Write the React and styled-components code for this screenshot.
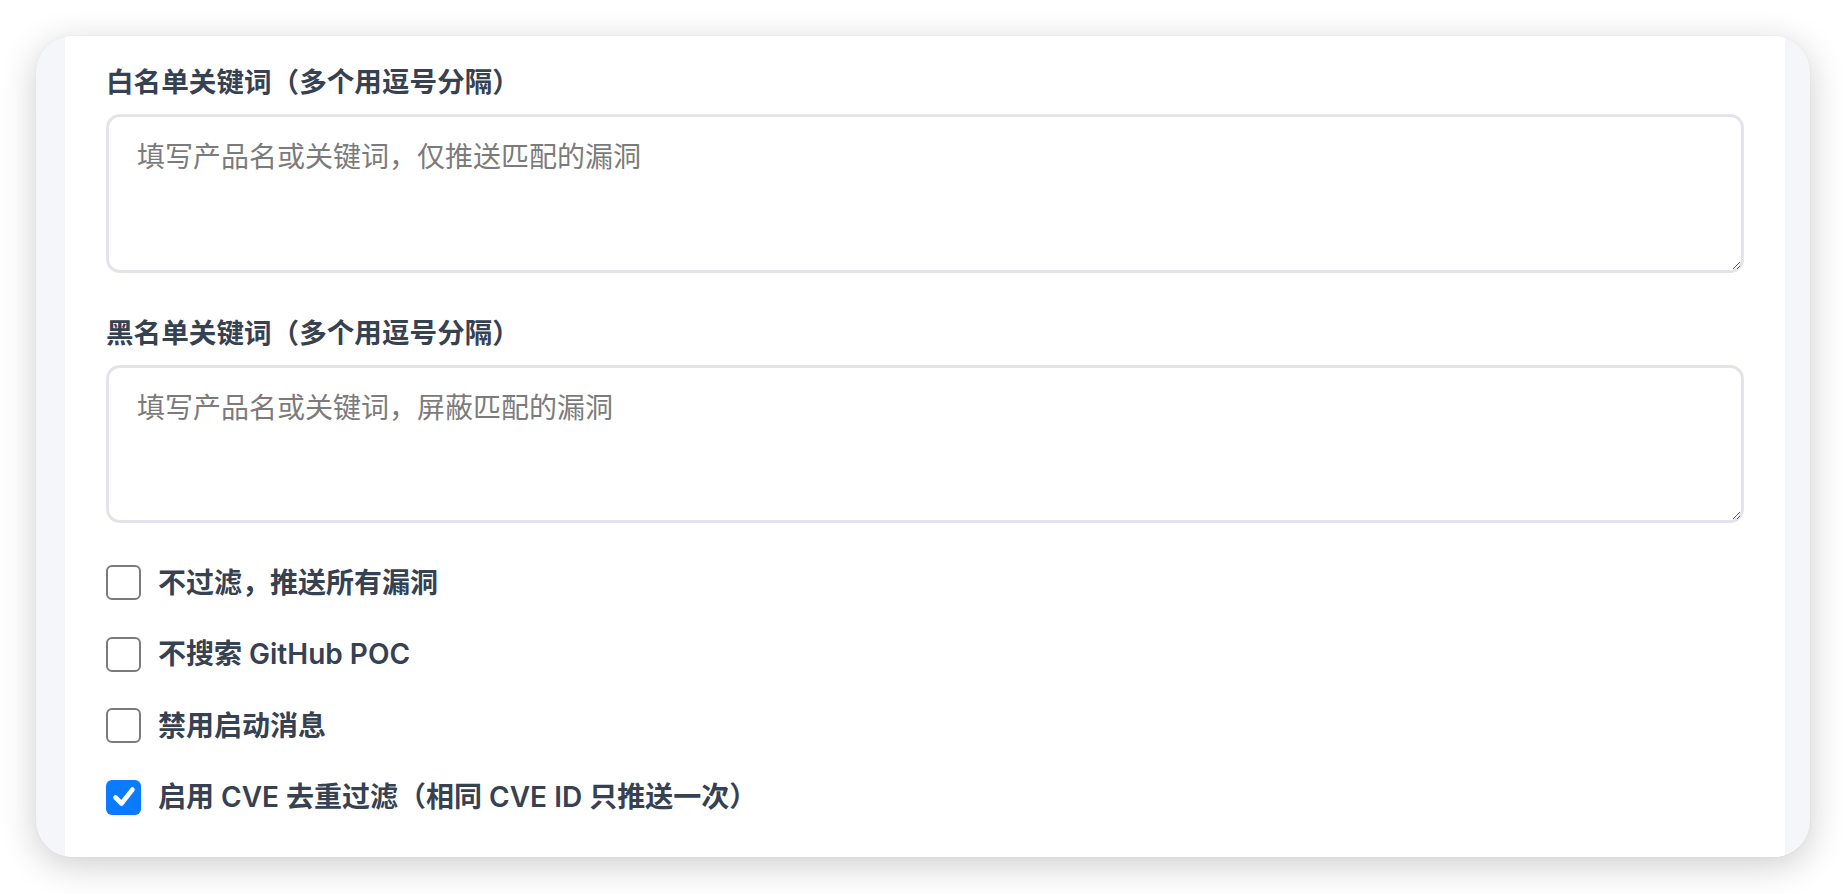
import React from "react";
import styled, { createGlobalStyle } from "styled-components";

const GlobalStyle = createGlobalStyle`
  html, body { margin: 0; padding: 0; background: #ffffff; }
  body {
    font-family: Inter, "Noto Sans CJK SC", "Noto Sans", sans-serif;
    -webkit-font-smoothing: antialiased;
  }
  * { box-sizing: border-box; }
`;

const Page = styled.div`
  width: 1846px;
  height: 894px;
  padding: 36px 36px 0 36px;
`;

const Card = styled.div`
  width: 1774px;
  height: 821px;
  background: #f5f6fa;
  border-radius: 36px;
  overflow: hidden;
  padding: 0 25px 0 29px;
  box-shadow: 0 8px 36px rgba(0, 0, 0, 0.2), 0 0 2px rgba(0, 0, 0, 0.06);
  display: flex;
`;

const Panel = styled.div`
  flex: 1;
  background: #ffffff;
  padding: 28px 41px 40px 41px;
  display: flex;
  flex-direction: column;
`;

const Field = styled.div`
  display: flex;
  flex-direction: column;
  margin-bottom: 42px;
`;

const Label = styled.label`
  font-size: 27.6px;
  line-height: 36px;
  font-weight: 600;
  color: #364152;
  margin-bottom: 14px;
`;

const TextArea = styled.textarea`
  width: 100%;
  height: ${(p) => p.$h}px;
  border: 3px solid #e3e4eb;
  border-radius: 14px;
  padding: 19px 28px;
  font-family: Inter, "Noto Sans CJK SC", sans-serif;
  font-size: 28px;
  line-height: 42px;
  color: #333;
  resize: vertical;
  outline: none;
  background: #fff;
  &::placeholder {
    color: #7b7b7b;
  }
`;

const CheckList = styled.div`
  display: flex;
  flex-direction: column;
  gap: 36px;
`;

const CheckRow = styled.label`
  display: flex;
  align-items: center;
  gap: 17px;
  height: 35.5px;
  cursor: pointer;
`;

const Box = styled.span`
  width: 35px;
  height: 35px;
  flex: none;
  border-radius: 6px;
  border: ${(p) => (p.$checked ? "none" : "2px solid #7a7a7a")};
  background: ${(p) => (p.$checked ? "#0a7aff" : "#ffffff")};
  display: flex;
  align-items: center;
  justify-content: center;
`;

const CheckText = styled.span`
  font-size: 28px;
  line-height: 36px;
  font-weight: 600;
  color: #364152;
`;

const Check = () => (
  <svg width="26" height="26" viewBox="0 0 26 26">
    <path
      d="M4.5 13.5 L10.5 19.5 L21.5 5.5"
      fill="none"
      stroke="#ffffff"
      strokeWidth="4.6"
      strokeLinecap="round"
      strokeLinejoin="round"
    />
  </svg>
);

const options = [
  { text: "不过滤，推送所有漏洞", checked: false },
  { text: "不搜索 GitHub POC", checked: false },
  { text: "禁用启动消息", checked: false },
  { text: "启用 CVE 去重过滤（相同 CVE ID 只推送一次）", checked: true },
];

export default function App() {
  return (
    <>
      <GlobalStyle />
      <Page>
        <Card>
          <Panel>
            <Field>
              <Label>白名单关键词（多个用逗号分隔）</Label>
              <TextArea $h={159} placeholder="填写产品名或关键词，仅推送匹配的漏洞" />
            </Field>
            <Field>
              <Label>黑名单关键词（多个用逗号分隔）</Label>
              <TextArea $h={158} placeholder="填写产品名或关键词，屏蔽匹配的漏洞" />
            </Field>
            <CheckList>
              {options.map((o) => (
                <CheckRow key={o.text}>
                  <Box $checked={o.checked}>{o.checked && <Check />}</Box>
                  <CheckText>{o.text}</CheckText>
                </CheckRow>
              ))}
            </CheckList>
          </Panel>
        </Card>
      </Page>
    </>
  );
}
